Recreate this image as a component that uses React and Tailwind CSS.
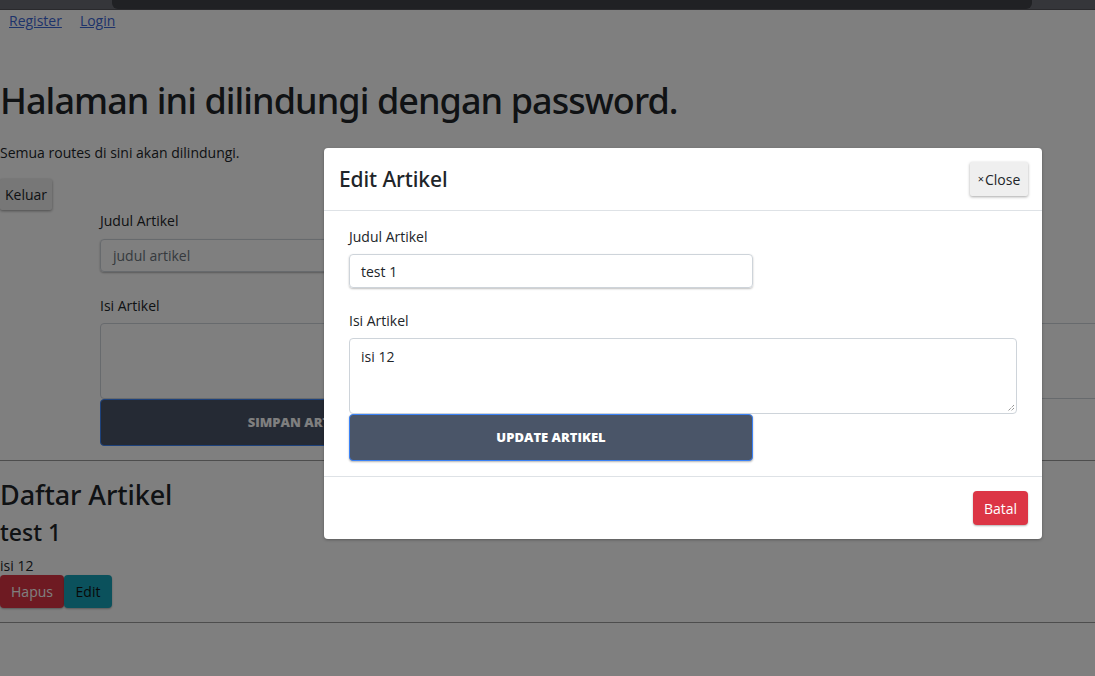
export default function App() {
  const font = { fontFamily: '"Open Sans", "Noto Sans", sans-serif' };
  const head = { fontFamily: '"Noto Sans", "Open Sans", sans-serif' };
  return (
    <div className="relative w-[1095px] h-[676px] overflow-hidden bg-white text-[#212529] text-[14px]" style={font}>
      {/* browser chrome strip */}
      <div className="relative z-20 h-[10px] bg-[#35363a] border-b border-[#2a2a2d]">
        <div className="ml-[112px] w-[920px] h-[9px] bg-[#202124] rounded-b-[6px]" />
      </div>

      {/* page */}
      <div className="flex flex-col">
        <div className="flex gap-[18px] pl-[9px] pt-[1px] h-[20px] items-center">
          <a href="#" className="text-[#3d66d6] underline leading-[20px]">Register</a>
          <a href="#" className="text-[#3d66d6] underline leading-[20px]">Login</a>
        </div>
        <h1 style={head} className="text-[36px] leading-[48px] font-medium mt-[47px] tracking-[-0.95px]">Halaman ini dilindungi dengan password.</h1>
        <p className="mt-[18px] leading-[20px]">Semua routes di sini akan dilindungi.</p>
        <div className="mt-[16px]">
          <button className="h-[31px] w-[52px] bg-[#efefef] shadow-[0_1px_3px_rgba(0,0,0,0.4)] rounded-[2px]">Keluar</button>
        </div>
        <div className="pl-[100px] flex flex-col mt-[1px]">
          <label className="leading-[20px] mt-[0px]">Judul Artikel</label>
          <div className="mt-[8px] h-[33px] w-[406px] border border-[#ced4da] rounded-[4px] shadow-[0_1px_2px_rgba(0,0,0,0.3)] flex items-center pl-[12px] text-[#6c757d]">judul artikel</div>
          <label className="leading-[20px] mt-[24px]">Isi Artikel</label>
          <div className="mt-[7px] h-[76px] w-[1000px] border border-[#ced4da] rounded-[4px]" />
          <button className="h-[47px] w-[406px] bg-[#4a5568] border border-[#3b82f6] rounded-[4px] text-white font-extrabold text-[13px] uppercase">Simpan Artikel</button>
        </div>
        <hr className="mt-[14px] border-t border-[#9a9a9a]" />
        <h2 style={head} className="text-[27px] leading-[34px] mt-[17px] font-medium tracking-[-0.1px]">Daftar Artikel</h2>
        <h3 style={head} className="text-[23px] leading-[30px] mt-[5px] font-medium">test 1</h3>
        <p className="leading-[20px] mt-[9px]">isi 12</p>
        <div className="flex -mt-[1px]">
          <button className="h-[33px] w-[64px] bg-[#dc3545] text-white rounded-[4px] shadow-[0_1px_2px_rgba(0,0,0,0.3)]">Hapus</button>
          <button className="h-[33px] w-[48px] bg-[#17a2b8] text-[#111] rounded-[4px] shadow-[0_1px_2px_rgba(0,0,0,0.3)]">Edit</button>
        </div>
        <hr className="mt-[14px] border-t border-[#9a9a9a]" />
      </div>

      {/* overlay */}
      <div className="absolute inset-0 top-[10px] bg-black/50 z-10" />

      {/* modal */}
      <div className="absolute z-20 left-[324px] top-[148px] w-[718px] h-[391px] bg-white rounded-[4px] flex flex-col shadow-[0_1px_3px_rgba(0,0,0,0.3)]">
        <div className="h-[63px] flex items-center justify-between pl-[15px] pr-[14px] border-b border-[#dee2e6]">
          <h5 style={head} className="text-[21px] leading-[26px] font-medium tracking-[-0.1px]">Edit Artikel</h5>
          <button className="h-[34px] w-[58px] bg-[#efefef] shadow-[0_1px_3px_rgba(0,0,0,0.35)] rounded-[2px] text-[14px] flex items-center justify-center">
            <span className="text-[11px] mr-[1px]">×</span>Close
          </button>
        </div>
        <div className="flex flex-col px-[25px] pt-[16px] pb-[15px] border-b border-[#dee2e6]">
          <label className="leading-[20px]">Judul Artikel</label>
          <div className="mt-[7px] h-[34px] w-[404px] border border-[#ced4da] rounded-[4px] shadow-[0_1px_2px_rgba(0,0,0,0.25)] flex items-center pl-[11px]">test 1</div>
          <label className="leading-[20px] mt-[23px]">Isi Artikel</label>
          <div className="relative mt-[7px] h-[76px] w-full border border-[#ced4da] rounded-[4px] pl-[11px] pt-[7px]">
            isi 12
            <svg className="absolute right-[1px] bottom-[1px]" width="9" height="9" viewBox="0 0 9 9">
              <path d="M8 2 L2 8 M8 5 L5 8" stroke="#666" strokeWidth="1" strokeDasharray="1 1" />
            </svg>
          </div>
          <button className="h-[47px] w-[404px] bg-[#4a5568] border border-[#3b82f6] rounded-[4px] text-white font-extrabold text-[13px] uppercase shadow-[0_1px_2px_rgba(0,0,0,0.3)]">Update Artikel</button>
        </div>
        <div className="flex-1 flex items-center justify-end pr-[14px]">
          <button className="h-[34px] w-[55px] bg-[#dc3545] text-white rounded-[4px] shadow-[0_1px_2px_rgba(0,0,0,0.3)]">Batal</button>
        </div>
      </div>
    </div>
  );
}
